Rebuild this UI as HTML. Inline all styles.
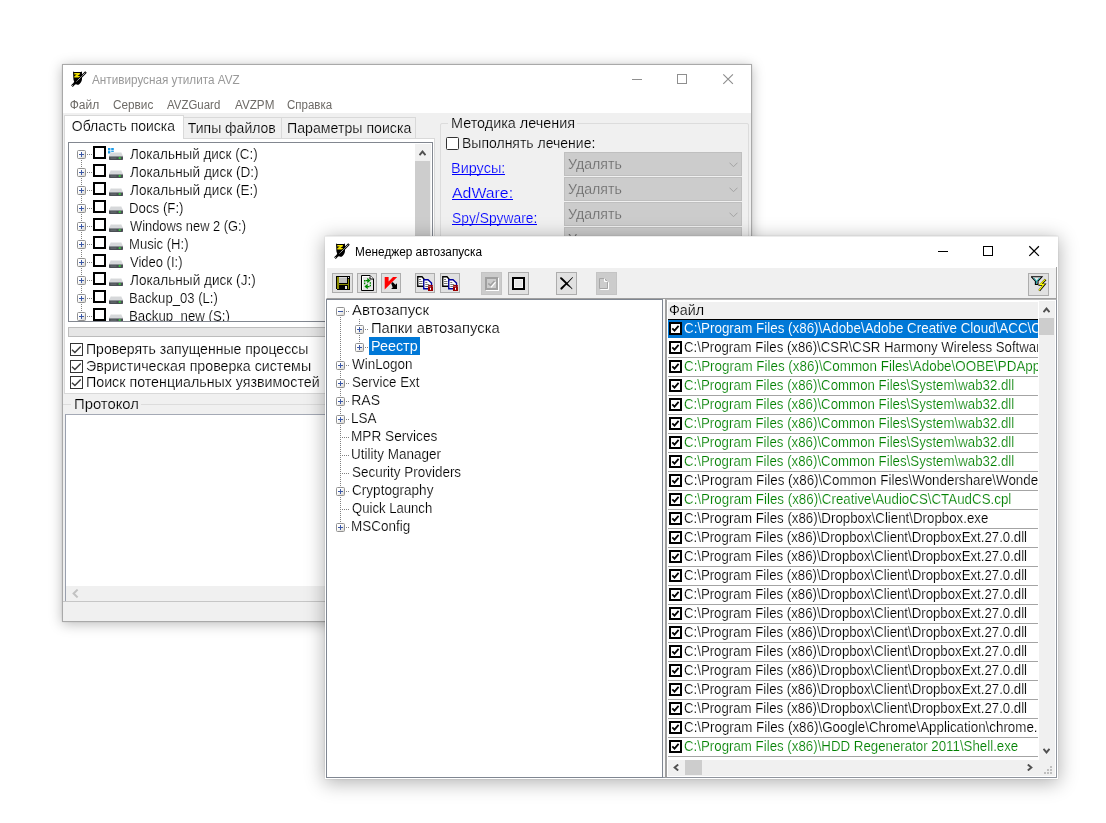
<!DOCTYPE html>
<html><head><meta charset="utf-8"><title>AVZ</title><style>
*{box-sizing:border-box;margin:0;padding:0}
html,body{width:1106px;height:823px;overflow:hidden;background:#fff}
body{position:relative;font-family:"Liberation Sans", sans-serif;font-size:14px;color:#000}
div,svg{position:absolute}
#r{left:0;top:0;width:1106px;height:823px;overflow:hidden;will-change:transform}
.t{white-space:pre;line-height:16px;height:16px;transform-origin:0 0}
.e{width:9px;height:9px;border:1px solid #919191;border-radius:1.5px;background:linear-gradient(135deg,#fff 35%,#d8d6d0)}
.e:before{content:"";position:absolute;left:1px;top:3px;width:5px;height:1px;background:#3a57a6}
.e.p:after{content:"";position:absolute;left:3px;top:1px;width:1px;height:5px;background:#3a57a6}
.hd{height:1px;background:repeating-linear-gradient(90deg,#808080 0 1px,transparent 1px 2px)}
.vd{width:1px;background:repeating-linear-gradient(180deg,#808080 0 1px,transparent 1px 2px)}
.cb{border:2px solid #000;background:#fff}
.b{border:1px solid #adadad;background:#e1e1e1}
.b.d{background:#ccc;border-color:#c4c4c4}
.r{left:0;width:370px;height:19px;border-bottom:1px solid #a4a4a4;overflow:hidden}
.r .t{left:16px;top:0}
.r svg{left:1px;top:2px}
.g{color:#008000}
</style></head><body><div id="r">
<div style="left:62px;top:64px;width:690px;height:558px;background:#f0f0f0;border:1px solid #a9a9a9;box-shadow:0 2px 12px rgba(0,0,0,.27),0 0 2px rgba(0,0,0,.1)"></div>
<div style="left:63px;top:65px;width:688px;height:48px;background:#fff"></div>
<svg style="left:71px;top:71px" width="16" height="16" viewBox="0 0 16 16" ><path d="M2 .2Q2.6 1.1 4 1.1H9Q10.4 1.1 11 .2V8.2Q10.6 12 7 14Q3.2 12.4 2.4 8.2Z" fill="#000"/><path d="M3.3 1.9h5.6v1.3L6.4 5h2.5v1.6H3.3V5.2L5.8 3.4H3.3z" fill="#f2e100"/><path d="M.9 15.1L15 1" stroke="#000" stroke-width="2.2"/><path d="M3.2 10.8l2.4 2.4" stroke="#000" stroke-width="1.6"/><path d="M5.6 10.4L14.6 1.4" stroke="#fff" stroke-width=".8" stroke-dasharray="1.3 .5"/><path d="M1.2 14.8l.9-.9" stroke="#fff" stroke-width=".8"/></svg>
<div class="t" style="left:92.1px;top:72px;font-size:12px;color:#999;transform:scaleX(0.9770);">Антивирусная утилита AVZ</div>
<svg style="left:628px;top:70px" width="110" height="20" viewBox="0 0 110 20" ><g stroke="#8f8f8f" fill="none"><path d="M4 9.5h10"/><rect x="49.5" y="4.5" width="9" height="9"/><path d="M95.3 4.3l9.6 9.6M104.9 4.3l-9.6 9.6" stroke-width="1.15"/></g></svg>
<div class="t" style="left:69.7px;top:97px;font-size:12px;color:#6d6a66;">Файл</div>
<div class="t" style="left:112.6px;top:97px;font-size:12px;color:#6d6a66;transform:scaleX(0.9809);">Сервис</div>
<div class="t" style="left:167.1px;top:97px;font-size:12px;color:#6d6a66;transform:scaleX(0.9543);">AVZGuard</div>
<div class="t" style="left:234.5px;top:97px;font-size:12px;color:#6d6a66;transform:scaleX(0.9735);">AVZPM</div>
<div class="t" style="left:287.3px;top:97px;font-size:12px;color:#6d6a66;transform:scaleX(0.9598);">Справка</div>
<div style="left:184px;top:117px;width:98px;height:22px;background:#f0f0f0;border:1px solid #d9d9d9;border-bottom:0;border-left:0"></div>
<div style="left:281px;top:117px;width:135px;height:22px;background:#f0f0f0;border:1px solid #d9d9d9;border-bottom:0"></div>
<div style="left:64px;top:138px;width:371px;height:256px;background:#fff;border:1px solid #d9d9d9"></div>
<div style="left:64px;top:115px;width:120px;height:24px;background:#fff;border:1px solid #d9d9d9;border-bottom:0"></div>
<div class="t" style="left:71.8px;top:118px;-webkit-text-stroke:0.18px #fff;">Область поиска</div>
<div class="t" style="left:187.8px;top:120px;-webkit-text-stroke:0.18px #f0f0f0;">Типы файлов</div>
<div class="t" style="left:287.1px;top:120px;transform:scaleX(1.0115);-webkit-text-stroke:0.18px #f0f0f0;">Параметры поиска</div>
<div style="left:68px;top:142px;width:365px;height:180px;background:#fff;border:1px solid #828790;overflow:hidden">
<div class="vd" style="left:12px;top:17px;width:1px;height:170px;"></div>
<div class="hd" style="left:18px;top:11px;width:6px;height:1px;"></div>
<div class="e p" style="left:8px;top:7px;width:9px;height:9px;"></div>
<div class="cb" style="left:24px;top:3px;width:13px;height:13px;"></div>
<svg style="left:39px;top:5px" width="6" height="6" viewBox="0 0 6 6" ><rect x="0" y="0" width="2.4" height="2.4" fill="#1b9cea"/><rect x="3.2" y="0" width="2.6" height="2.4" fill="#1b9cea"/><rect x="0" y="3.1" width="2.4" height="2.4" fill="#1b9cea"/><rect x="3.2" y="3.1" width="2.6" height="2.4" fill="#1b9cea"/></svg>
<svg style="left:40px;top:9px" width="14" height="8" viewBox="0 0 14 8" ><path d="M2 0h10l2 4H0z" fill="#d6d8da"/><path d="M2.3 0h9.4l.4 1H1.9z" fill="#eceded"/><rect x="0" y="4" width="14" height="4" rx=".7" fill="#4a4f54"/><rect x="0" y="4" width="14" height="1" fill="#8b9094"/><rect x="1.5" y="5.6" width="6" height="1" fill="#6c7176"/><rect x="9.6" y="5.2" width="2.2" height="1.6" rx=".5" fill="#38e038"/></svg>
<div class="t" style="left:60.6px;top:3px;transform:scaleX(0.9642);-webkit-text-stroke:0.18px #fff;">Локальный диск (C:)</div>
<div class="hd" style="left:18px;top:29px;width:6px;height:1px;"></div>
<div class="e p" style="left:8px;top:25px;width:9px;height:9px;"></div>
<div class="cb" style="left:24px;top:21px;width:13px;height:13px;"></div>
<svg style="left:40px;top:27px" width="14" height="8" viewBox="0 0 14 8" ><path d="M2 0h10l2 4H0z" fill="#d6d8da"/><path d="M2.3 0h9.4l.4 1H1.9z" fill="#eceded"/><rect x="0" y="4" width="14" height="4" rx=".7" fill="#4a4f54"/><rect x="0" y="4" width="14" height="1" fill="#8b9094"/><rect x="1.5" y="5.6" width="6" height="1" fill="#6c7176"/><rect x="9.6" y="5.2" width="2.2" height="1.6" rx=".5" fill="#38e038"/></svg>
<div class="t" style="left:60.6px;top:21px;transform:scaleX(0.9703);-webkit-text-stroke:0.18px #fff;">Локальный диск (D:)</div>
<div class="hd" style="left:18px;top:47px;width:6px;height:1px;"></div>
<div class="e p" style="left:8px;top:43px;width:9px;height:9px;"></div>
<div class="cb" style="left:24px;top:39px;width:13px;height:13px;"></div>
<svg style="left:40px;top:45px" width="14" height="8" viewBox="0 0 14 8" ><path d="M2 0h10l2 4H0z" fill="#d6d8da"/><path d="M2.3 0h9.4l.4 1H1.9z" fill="#eceded"/><rect x="0" y="4" width="14" height="4" rx=".7" fill="#4a4f54"/><rect x="0" y="4" width="14" height="1" fill="#8b9094"/><rect x="1.5" y="5.6" width="6" height="1" fill="#6c7176"/><rect x="9.6" y="5.2" width="2.2" height="1.6" rx=".5" fill="#38e038"/></svg>
<div class="t" style="left:60.6px;top:39px;transform:scaleX(0.9700);-webkit-text-stroke:0.18px #fff;">Локальный диск (E:)</div>
<div class="hd" style="left:18px;top:65px;width:6px;height:1px;"></div>
<div class="e p" style="left:8px;top:61px;width:9px;height:9px;"></div>
<div class="cb" style="left:24px;top:57px;width:13px;height:13px;"></div>
<svg style="left:40px;top:63px" width="14" height="8" viewBox="0 0 14 8" ><path d="M2 0h10l2 4H0z" fill="#d6d8da"/><path d="M2.3 0h9.4l.4 1H1.9z" fill="#eceded"/><rect x="0" y="4" width="14" height="4" rx=".7" fill="#4a4f54"/><rect x="0" y="4" width="14" height="1" fill="#8b9094"/><rect x="1.5" y="5.6" width="6" height="1" fill="#6c7176"/><rect x="9.6" y="5.2" width="2.2" height="1.6" rx=".5" fill="#38e038"/></svg>
<div class="t" style="left:59.6px;top:57px;transform:scaleX(0.9470);-webkit-text-stroke:0.18px #fff;">Docs (F:)</div>
<div class="hd" style="left:18px;top:83px;width:6px;height:1px;"></div>
<div class="e p" style="left:8px;top:79px;width:9px;height:9px;"></div>
<div class="cb" style="left:24px;top:75px;width:13px;height:13px;"></div>
<svg style="left:40px;top:81px" width="14" height="8" viewBox="0 0 14 8" ><path d="M2 0h10l2 4H0z" fill="#d6d8da"/><path d="M2.3 0h9.4l.4 1H1.9z" fill="#eceded"/><rect x="0" y="4" width="14" height="4" rx=".7" fill="#4a4f54"/><rect x="0" y="4" width="14" height="1" fill="#8b9094"/><rect x="1.5" y="5.6" width="6" height="1" fill="#6c7176"/><rect x="9.6" y="5.2" width="2.2" height="1.6" rx=".5" fill="#38e038"/></svg>
<div class="t" style="left:60.6px;top:75px;transform:scaleX(0.9199);-webkit-text-stroke:0.18px #fff;">Windows new 2 (G:)</div>
<div class="hd" style="left:18px;top:101px;width:6px;height:1px;"></div>
<div class="e p" style="left:8px;top:97px;width:9px;height:9px;"></div>
<div class="cb" style="left:24px;top:93px;width:13px;height:13px;"></div>
<svg style="left:40px;top:99px" width="14" height="8" viewBox="0 0 14 8" ><path d="M2 0h10l2 4H0z" fill="#d6d8da"/><path d="M2.3 0h9.4l.4 1H1.9z" fill="#eceded"/><rect x="0" y="4" width="14" height="4" rx=".7" fill="#4a4f54"/><rect x="0" y="4" width="14" height="1" fill="#8b9094"/><rect x="1.5" y="5.6" width="6" height="1" fill="#6c7176"/><rect x="9.6" y="5.2" width="2.2" height="1.6" rx=".5" fill="#38e038"/></svg>
<div class="t" style="left:59.6px;top:93px;transform:scaleX(0.9326);-webkit-text-stroke:0.18px #fff;">Music (H:)</div>
<div class="hd" style="left:18px;top:119px;width:6px;height:1px;"></div>
<div class="e p" style="left:8px;top:115px;width:9px;height:9px;"></div>
<div class="cb" style="left:24px;top:111px;width:13px;height:13px;"></div>
<svg style="left:40px;top:117px" width="14" height="8" viewBox="0 0 14 8" ><path d="M2 0h10l2 4H0z" fill="#d6d8da"/><path d="M2.3 0h9.4l.4 1H1.9z" fill="#eceded"/><rect x="0" y="4" width="14" height="4" rx=".7" fill="#4a4f54"/><rect x="0" y="4" width="14" height="1" fill="#8b9094"/><rect x="1.5" y="5.6" width="6" height="1" fill="#6c7176"/><rect x="9.6" y="5.2" width="2.2" height="1.6" rx=".5" fill="#38e038"/></svg>
<div class="t" style="left:60.6px;top:111px;transform:scaleX(0.9278);-webkit-text-stroke:0.18px #fff;">Video (I:)</div>
<div class="hd" style="left:18px;top:137px;width:6px;height:1px;"></div>
<div class="e p" style="left:8px;top:133px;width:9px;height:9px;"></div>
<div class="cb" style="left:24px;top:129px;width:13px;height:13px;"></div>
<svg style="left:40px;top:135px" width="14" height="8" viewBox="0 0 14 8" ><path d="M2 0h10l2 4H0z" fill="#d6d8da"/><path d="M2.3 0h9.4l.4 1H1.9z" fill="#eceded"/><rect x="0" y="4" width="14" height="4" rx=".7" fill="#4a4f54"/><rect x="0" y="4" width="14" height="1" fill="#8b9094"/><rect x="1.5" y="5.6" width="6" height="1" fill="#6c7176"/><rect x="9.6" y="5.2" width="2.2" height="1.6" rx=".5" fill="#38e038"/></svg>
<div class="t" style="left:60.6px;top:129px;transform:scaleX(0.9720);-webkit-text-stroke:0.18px #fff;">Локальный диск (J:)</div>
<div class="hd" style="left:18px;top:155px;width:6px;height:1px;"></div>
<div class="e p" style="left:8px;top:151px;width:9px;height:9px;"></div>
<div class="cb" style="left:24px;top:147px;width:13px;height:13px;"></div>
<svg style="left:40px;top:153px" width="14" height="8" viewBox="0 0 14 8" ><path d="M2 0h10l2 4H0z" fill="#d6d8da"/><path d="M2.3 0h9.4l.4 1H1.9z" fill="#eceded"/><rect x="0" y="4" width="14" height="4" rx=".7" fill="#4a4f54"/><rect x="0" y="4" width="14" height="1" fill="#8b9094"/><rect x="1.5" y="5.6" width="6" height="1" fill="#6c7176"/><rect x="9.6" y="5.2" width="2.2" height="1.6" rx=".5" fill="#38e038"/></svg>
<div class="t" style="left:59.6px;top:147px;transform:scaleX(0.9350);-webkit-text-stroke:0.18px #fff;">Backup_03 (L:)</div>
<div class="hd" style="left:18px;top:173px;width:6px;height:1px;"></div>
<div class="e p" style="left:8px;top:169px;width:9px;height:9px;"></div>
<div class="cb" style="left:24px;top:165px;width:13px;height:13px;"></div>
<svg style="left:40px;top:171px" width="14" height="8" viewBox="0 0 14 8" ><path d="M2 0h10l2 4H0z" fill="#d6d8da"/><path d="M2.3 0h9.4l.4 1H1.9z" fill="#eceded"/><rect x="0" y="4" width="14" height="4" rx=".7" fill="#4a4f54"/><rect x="0" y="4" width="14" height="1" fill="#8b9094"/><rect x="1.5" y="5.6" width="6" height="1" fill="#6c7176"/><rect x="9.6" y="5.2" width="2.2" height="1.6" rx=".5" fill="#38e038"/></svg>
<div class="t" style="left:59.6px;top:165px;transform:scaleX(0.9465);-webkit-text-stroke:0.18px #fff;">Backup_new (S:)</div>
<div style="left:346px;top:1px;width:16px;height:177px;background:#f0f0f0"></div>
<div style="left:346px;top:18px;width:15px;height:160px;background:#cdcdcd"></div>
<svg style="left:350px;top:7px" width="7" height="6" viewBox="0 0 7 6" ><path d="M.5 5.2L3.5 1.6 6.5 5.2" stroke="#505050" stroke-width="1.9" fill="none"/></svg>
</div>
<div style="left:68px;top:327px;width:365px;height:10px;background:#e6e6e6;border:1px solid #bcbcbc"></div>
<svg style="left:70px;top:343px" width="13" height="13" viewBox="0 0 13 13" ><rect x=".5" y=".5" width="12" height="12" fill="#fff" stroke="#333"/><path d="M2 6.7L4.9 9.5 10.7 3.5" stroke="#3a3a3a" stroke-width="1.4" fill="none"/></svg>
<div class="t" style="left:85.7px;top:341px;transform:scaleX(1.0036);-webkit-text-stroke:0.18px #fff;">Проверять запущенные процессы</div>
<svg style="left:70px;top:360px" width="13" height="13" viewBox="0 0 13 13" ><rect x=".5" y=".5" width="12" height="12" fill="#fff" stroke="#333"/><path d="M2 6.7L4.9 9.5 10.7 3.5" stroke="#3a3a3a" stroke-width="1.4" fill="none"/></svg>
<div class="t" style="left:86.1px;top:358px;transform:scaleX(1.0150);-webkit-text-stroke:0.18px #fff;">Эвристическая проверка системы</div>
<svg style="left:70px;top:376px" width="13" height="13" viewBox="0 0 13 13" ><rect x=".5" y=".5" width="12" height="12" fill="#fff" stroke="#333"/><path d="M2 6.7L4.9 9.5 10.7 3.5" stroke="#3a3a3a" stroke-width="1.4" fill="none"/></svg>
<div class="t" style="left:85.6px;top:374px;transform:scaleX(1.0173);-webkit-text-stroke:0.18px #fff;">Поиск потенциальных уязвимостей</div>
<div style="left:63px;top:404px;width:372px;height:1px;background:#dcdcdc"></div>
<div style="left:71px;top:398px;width:70px;height:12px;background:#f0f0f0"></div>
<div class="t" style="left:73.5px;top:396px;transform:scaleX(1.0590);-webkit-text-stroke:0.18px #f0f0f0;">Протокол</div>
<div style="left:65px;top:414px;width:420px;height:188px;background:#fff;border:1px solid #9aa0ae;border-top-color:#a4a9b5"></div>
<div style="left:66px;top:586px;width:420px;height:15px;background:#f0f0f0"></div>
<svg style="left:72px;top:589px" width="7" height="9" viewBox="0 0 7 9" ><path d="M5.6 .6L1.6 4.5 5.6 8.4" stroke="#c2c2c2" stroke-width="2" fill="none"/></svg>
<div style="left:63px;top:601px;width:688px;height:1px;background:#c6c6c6"></div>
<div style="left:440px;top:123px;width:309px;height:320px;border:1px solid #dcdcdc;border-radius:2px"></div>
<div style="left:448px;top:117px;width:129px;height:12px;background:#f0f0f0"></div>
<div class="t" style="left:450.6px;top:115px;transform:scaleX(1.0281);-webkit-text-stroke:0.18px #f0f0f0;">Методика лечения</div>
<div style="left:446px;top:137px;width:13px;height:13px;background:#fff;border:1px solid #333;border-radius:1.5px"></div>
<div class="t" style="left:462.0px;top:135px;-webkit-text-stroke:0.18px #f0f0f0;">Выполнять лечение:</div>
<div class="t" style="left:451.0px;top:160px;color:#00f;transform:scaleX(1.0326);-webkit-text-stroke:0.18px #f0f0f0;">Вирусы:</div>
<div style="left:452px;top:174px;width:53px;height:1px;background:#00f"></div>
<div class="t" style="left:452.2px;top:185px;color:#00f;transform:scaleX(1.1321);-webkit-text-stroke:0.18px #f0f0f0;">AdWare:</div>
<div style="left:452px;top:199px;width:61px;height:1px;background:#00f"></div>
<div class="t" style="left:451.6px;top:210px;color:#00f;transform:scaleX(0.9886);-webkit-text-stroke:0.18px #f0f0f0;">Spy/Spyware:</div>
<div style="left:452px;top:224px;width:85px;height:1px;background:#00f"></div>
<div style="left:564px;top:152px;width:178px;height:24px;background:#ccc;border:1px solid #bfbfbf"></div>
<div class="t" style="left:567.9px;top:156px;color:#6d6d6d;transform:scaleX(1.0102);-webkit-text-stroke:0.18px #ccc;">Удалять</div>
<svg style="left:729px;top:162px" width="9" height="6" viewBox="0 0 9 6" ><path d="M.5 .7L4.5 4.7 8.5 .7" stroke="#a2a2a2" fill="none"/></svg>
<div style="left:564px;top:177px;width:178px;height:24px;background:#ccc;border:1px solid #bfbfbf"></div>
<div class="t" style="left:567.9px;top:181px;color:#6d6d6d;transform:scaleX(1.0102);-webkit-text-stroke:0.18px #ccc;">Удалять</div>
<svg style="left:729px;top:187px" width="9" height="6" viewBox="0 0 9 6" ><path d="M.5 .7L4.5 4.7 8.5 .7" stroke="#a2a2a2" fill="none"/></svg>
<div style="left:564px;top:202px;width:178px;height:24px;background:#ccc;border:1px solid #bfbfbf"></div>
<div class="t" style="left:567.9px;top:206px;color:#6d6d6d;transform:scaleX(1.0102);-webkit-text-stroke:0.18px #ccc;">Удалять</div>
<svg style="left:729px;top:212px" width="9" height="6" viewBox="0 0 9 6" ><path d="M.5 .7L4.5 4.7 8.5 .7" stroke="#a2a2a2" fill="none"/></svg>
<div style="left:564px;top:227px;width:178px;height:24px;background:#ccc;border:1px solid #bfbfbf"></div>
<div class="t" style="left:567.9px;top:231px;color:#6d6d6d;transform:scaleX(1.0102);-webkit-text-stroke:0.18px #ccc;">Удалять</div>
<svg style="left:729px;top:237px" width="9" height="6" viewBox="0 0 9 6" ><path d="M.5 .7L4.5 4.7 8.5 .7" stroke="#a2a2a2" fill="none"/></svg>
<div style="left:325px;top:236px;width:733px;height:543px;background:#fff;border-top:1px solid #ececec;box-shadow:0 3px 18px 1px rgba(0,0,0,.30),0 0 2px rgba(0,0,0,.14)"></div>
<div style="left:326px;top:268px;width:731px;height:31px;background:#f0f0f0;border-left:1px solid #fff;border-right:1px solid #a0a0a0;border-bottom:1px solid #a0a0a0"></div>
<div style="left:1056px;top:267px;width:1px;height:1px;background:#a0a0a0"></div>
<svg style="left:334px;top:243px" width="16" height="16" viewBox="0 0 16 16" ><path d="M2 .2Q2.6 1.1 4 1.1H9Q10.4 1.1 11 .2V8.2Q10.6 12 7 14Q3.2 12.4 2.4 8.2Z" fill="#000"/><path d="M3.3 1.9h5.6v1.3L6.4 5h2.5v1.6H3.3V5.2L5.8 3.4H3.3z" fill="#f2e100"/><path d="M.9 15.1L15 1" stroke="#000" stroke-width="2.2"/><path d="M3.2 10.8l2.4 2.4" stroke="#000" stroke-width="1.6"/><path d="M5.6 10.4L14.6 1.4" stroke="#fff" stroke-width=".8" stroke-dasharray="1.3 .5"/><path d="M1.2 14.8l.9-.9" stroke="#fff" stroke-width=".8"/></svg>
<div class="t" style="left:354.5px;top:244px;font-size:12px;transform:scaleX(0.9845);">Менеджер автозапуска</div>
<svg style="left:930px;top:242px" width="120" height="20" viewBox="0 0 120 20" ><g stroke="#000" fill="none"><path d="M8 9.5h10"/><rect x="53.5" y="4.5" width="9" height="9"/><path d="M99.3 4.3l9.6 9.6M108.9 4.3l-9.6 9.6" stroke-width="1.25"/></g></svg>
<div class="b" style="left:332px;top:273px;width:21px;height:20px;"></div>
<div class="b" style="left:357px;top:273px;width:20px;height:20px;"></div>
<div class="b" style="left:381px;top:273px;width:20px;height:20px;"></div>
<div class="b" style="left:415px;top:273px;width:20px;height:20px;"></div>
<div class="b" style="left:440px;top:273px;width:20px;height:20px;"></div>
<div class="b d" style="left:481px;top:272px;width:21px;height:23px;"></div>
<div class="b" style="left:508px;top:272px;width:21px;height:23px;"></div>
<div class="b" style="left:556px;top:272px;width:21px;height:23px;"></div>
<div class="b d" style="left:596px;top:272px;width:21px;height:23px;"></div>
<div class="b" style="left:1028px;top:273px;width:21px;height:23px;"></div>
<svg style="left:336px;top:276px" width="14" height="14" viewBox="0 0 14 14" shape-rendering="crispEdges"><rect x="0" y="0" width="14" height="14" fill="#000"/><rect x="1" y="1" width="2" height="12" fill="#8c8c00"/><rect x="12" y="3" width="1" height="10" fill="#8c8c00"/><rect x="3" y="8" width="9" height="1" fill="#8c8c00"/><rect x="3" y="1" width="8" height="6" fill="#c0c0c0"/><rect x="3" y="1" width="8" height="1" fill="#d8d8d8"/><rect x="12" y="1" width="1" height="1" fill="#e8e8e8"/><rect x="3" y="9" width="9" height="4" fill="#000"/><rect x="9" y="10" width="2" height="3" fill="#e0e0e0"/><rect x="0" y="13" width="1" height="1" fill="#e1e1e1"/></svg>
<svg style="left:361px;top:275px" width="13" height="16" viewBox="0 0 13 16" ><path d="M.5 .5H9L12.5 4V15.5H.5z" fill="#e6e6e6" stroke="#000" stroke-width="1"/><path d="M9 .5V4h3.5" fill="#fff" stroke="#000" stroke-width="1"/><path d="M1.5 1.5h7M1.5 1.5v13" stroke="#fff" stroke-width="1" fill="none"/><g fill="#008a00" stroke="none"><path d="M6.3 2.8L9.6 5.5 6.3 8.2V6.3H4.5V5H6.3z"/><path d="M6.700000000000001 8.8L3.4 11.5 6.7 14.2V12.3H8.5V11H6.7z"/><rect x="3" y="5" width="1.3" height="1.6"/><rect x="3" y="7.6" width="1.3" height="1.6"/><rect x="8.700000000000001" y="7.2" width="1.3" height="1.6"/><rect x="8.700000000000001" y="9.8" width="1.3" height="1.5"/></g></svg>
<svg style="left:384px;top:277px" width="14" height="13" viewBox="0 0 14 13" ><path d="M.7 0H4.6V4.6L9 0h4.2L.7 12.6z" fill="#f00"/><path d="M7.2 6.6l1.5-1.5 2.7 2.7 1.6-1.6v5.9H7.1l1.6-1.6z" fill="#000"/></svg>
<svg style="left:417px;top:276px" width="17" height="16" viewBox="0 0 17 16" ><path d="M.75 .75H5L7 3v7.25H.75z" fill="#fff" stroke="#000" stroke-width="1.3"/><path d="M2 3.5h2M2 5.5h3.5M2 7.5h3.5" stroke="#777" stroke-width="1"/><path d="M6.75 3.75H11L14.5 7v5.75H6.75z" fill="#fff" stroke="#00009c" stroke-width="1.4"/><path d="M8.3 6.5h2M8.3 8.5h4M8.3 10.5h3" stroke="#777" stroke-width="1"/><path d="M11.8 10.6V9.6h3.4v1" stroke="#9c0000" stroke-width="1.2" fill="none"/><rect x="11" y="10.5" width="5" height="4.5" fill="#9c0000"/><rect x="13" y="11.8" width="1" height="2" fill="#fff"/></svg>
<svg style="left:442px;top:276px" width="17" height="16" viewBox="0 0 17 16" ><path d="M.75 .75H5L7 3v7.25H.75z" fill="#fff" stroke="#000" stroke-width="1.3"/><path d="M2 3.5h2M2 5.5h3.5M2 7.5h3.5" stroke="#777" stroke-width="1"/><path d="M6.75 3.75H11L14.5 7v5.75H6.75z" fill="#fff" stroke="#00009c" stroke-width="1.4"/><path d="M8.3 6.5h2M8.3 8.5h4M8.3 10.5h3" stroke="#777" stroke-width="1"/><path d="M11.8 10.6V9.6h3.4v1" stroke="#9c0000" stroke-width="1.2" fill="none"/><rect x="11" y="10.5" width="5" height="4.5" fill="#9c0000"/><rect x="13" y="11.8" width="1" height="2" fill="#fff"/></svg>
<svg style="left:485px;top:277px" width="14" height="14" viewBox="0 0 14 14" ><rect x="2" y="2" width="11" height="11" fill="none" stroke="#fff" stroke-width="2"/><rect x="1" y="1" width="11" height="11" fill="#ccc" stroke="#a0a0a0" stroke-width="2"/><path d="M4.2 7.4l2.2 2.2 4-4.6" stroke="#fff" stroke-width="1.6" fill="none"/><path d="M3.3 6.4l2.2 2.2 4-4.6" stroke="#a0a0a0" stroke-width="1.7" fill="none"/></svg>
<svg style="left:512px;top:277px" width="13" height="13" viewBox="0 0 13 13" ><rect x="1" y="1" width="11" height="11" fill="#e4e4e4" stroke="#000" stroke-width="2"/><rect x="2.5" y="2.5" width="8" height="8" fill="none" stroke="#f4f4f4" stroke-width="1"/></svg>
<svg style="left:559px;top:276px" width="15" height="15" viewBox="0 0 15 15" ><path d="M1.2 1.6Q2.3 .8 3.4 1.9L8 6.6 13.6 1l.4.4L8.7 7.4l4.2 4.5.6 1.2-.7.2-.6-1L7.4 8.8 3.2 13.3Q2.3 14 1.6 13.2T1.9 11.600000000000001L6.300000000000001 7.6 1.3 2.8Q.7 2.1 1.2 1.6z" fill="#000"/></svg>
<svg style="left:599px;top:278px" width="11" height="12" viewBox="0 0 11 12" ><path d="M1.5 1.5H6.5L9.5 4.5V11.5H1.5z" fill="none" stroke="#fff" stroke-width="1"/><path d="M.5 .5H5.5L8.5 3.5V10.5H.5z" fill="#ccc" stroke="#a6a6a6" stroke-width="1"/><path d="M5.5 .5V3.5H8.5" fill="none" stroke="#fff" stroke-width="1"/></svg>
<svg style="left:1031px;top:276px" width="18" height="16" viewBox="0 0 18 16" ><path d="M.3 .8H11L7 5.2V8.4H4.4V5.2z" fill="#e8e8e8" stroke="#000" stroke-width="1.1"/><path d="M2.6 1.8L5.4 5V7.6M8.6 1.8L6 5" stroke="#00a0a0" stroke-width="1" fill="none"/><path d="M14.600000000000001 3.4L9.6 8.6H13.2L8.2 14.6" stroke="#000" stroke-width="2.2" fill="none"/><path d="M14.4 3.4L9.2 8.3H12.8L8 14.4" stroke="#ff0" stroke-width="1.2" fill="none"/></svg>
<div style="left:326px;top:299px;width:337px;height:479px;background:#fff;border:1px solid #7f8691;overflow:hidden">
<div class="vd" style="left:13px;top:17px;width:1px;height:210px;"></div>
<div class="vd" style="left:32px;top:19px;width:1px;height:28px;"></div>
<div class="hd" style="left:19px;top:11px;width:3px;height:1px;"></div>
<div class="e" style="left:9px;top:7px;width:9px;height:9px;"></div>
<div class="t" style="left:25.3px;top:2px;transform:scaleX(1.0686);-webkit-text-stroke:0.18px #fff;">Автозапуск</div>
<div class="hd" style="left:38px;top:29px;width:3px;height:1px;"></div>
<div class="e p" style="left:28px;top:25px;width:9px;height:9px;"></div>
<div class="t" style="left:44.0px;top:20px;transform:scaleX(1.0556);-webkit-text-stroke:0.18px #fff;">Папки автозапуска</div>
<div class="hd" style="left:38px;top:47px;width:3px;height:1px;"></div>
<div class="e p" style="left:28px;top:43px;width:9px;height:9px;"></div>
<div style="left:42px;top:37px;width:51px;height:18px;background:#0078d7"></div>
<div class="t" style="left:44.0px;top:38px;color:#fff;transform:scaleX(1.0260);-webkit-text-stroke:0.06px #0078d7;">Реестр</div>
<div class="hd" style="left:19px;top:65px;width:3px;height:1px;"></div>
<div class="e p" style="left:9px;top:61px;width:9px;height:9px;"></div>
<div class="t" style="left:25.2px;top:56px;transform:scaleX(0.9601);-webkit-text-stroke:0.18px #fff;">WinLogon</div>
<div class="hd" style="left:19px;top:83px;width:3px;height:1px;"></div>
<div class="e p" style="left:9px;top:79px;width:9px;height:9px;"></div>
<div class="t" style="left:24.7px;top:74px;transform:scaleX(0.9533);-webkit-text-stroke:0.18px #fff;">Service Ext</div>
<div class="hd" style="left:19px;top:101px;width:3px;height:1px;"></div>
<div class="e p" style="left:9px;top:97px;width:9px;height:9px;"></div>
<div class="t" style="left:24.2px;top:92px;-webkit-text-stroke:0.18px #fff;">RAS</div>
<div class="hd" style="left:19px;top:119px;width:3px;height:1px;"></div>
<div class="e p" style="left:9px;top:115px;width:9px;height:9px;"></div>
<div class="t" style="left:24.2px;top:110px;transform:scaleX(0.9647);-webkit-text-stroke:0.18px #fff;">LSA</div>
<div class="hd" style="left:15px;top:137px;width:7px;height:1px;"></div>
<div class="t" style="left:24.2px;top:128px;transform:scaleX(0.9732);-webkit-text-stroke:0.18px #fff;">MPR Services</div>
<div class="hd" style="left:15px;top:155px;width:7px;height:1px;"></div>
<div class="t" style="left:24.3px;top:146px;transform:scaleX(0.9635);-webkit-text-stroke:0.18px #fff;">Utility Manager</div>
<div class="hd" style="left:15px;top:173px;width:7px;height:1px;"></div>
<div class="t" style="left:24.7px;top:164px;transform:scaleX(0.9604);-webkit-text-stroke:0.18px #fff;">Security Providers</div>
<div class="hd" style="left:19px;top:191px;width:3px;height:1px;"></div>
<div class="e p" style="left:9px;top:187px;width:9px;height:9px;"></div>
<div class="t" style="left:24.6px;top:182px;transform:scaleX(0.9687);-webkit-text-stroke:0.18px #fff;">Cryptography</div>
<div class="hd" style="left:15px;top:209px;width:7px;height:1px;"></div>
<div class="t" style="left:24.7px;top:200px;transform:scaleX(0.9365);-webkit-text-stroke:0.18px #fff;">Quick Launch</div>
<div class="hd" style="left:19px;top:227px;width:3px;height:1px;"></div>
<div class="e p" style="left:9px;top:223px;width:9px;height:9px;"></div>
<div class="t" style="left:24.2px;top:218px;transform:scaleX(0.9627);-webkit-text-stroke:0.18px #fff;">MSConfig</div>
</div>
<div style="left:663px;top:299px;width:2px;height:479px;background:#f8f8f8"></div>
<div style="left:663px;top:777px;width:2px;height:1px;background:#8f949d"></div>
<div style="left:665px;top:299px;width:392px;height:479px;background:#fff;border:1px solid #8f949d;border-left:2px solid #a0a0a0;border-top-color:#b8b8b8;overflow:hidden">
<div style="left:1px;top:2px;width:370px;height:17px;background:#f0f0f0"></div>
<div class="t" style="left:2.2px;top:2px;transform:scaleX(1.0201);-webkit-text-stroke:0.18px #f0f0f0;">Файл</div>
<div class="r" style="top:20px;left:1px;background:#0078d7;height:18px;border-bottom:0;"><svg width="13" height="13" viewBox="0 0 13 13"><rect x="1" y="1" width="11" height="11" fill="#fff" stroke="#000" stroke-width="2"/><path d="M3.3 6.3l2.2 2.3 4.1-4.7" stroke="#000" stroke-width="1.8" fill="none"/></svg><div class="t" style="left:16.0px;color:#fff;transform:scaleX(0.9557);-webkit-text-stroke:0.08px #0078d7">C:\Program Files (x86)\Adobe\Adobe Creative Cloud\ACC\Creative Cloud.exe</div></div>
<div class="r" style="top:39px;left:1px;"><svg width="13" height="13" viewBox="0 0 13 13"><rect x="1" y="1" width="11" height="11" fill="#fff" stroke="#000" stroke-width="2"/><path d="M3.3 6.3l2.2 2.3 4.1-4.7" stroke="#000" stroke-width="1.8" fill="none"/></svg><div class="t" style="left:16.0px;transform:scaleX(0.9451);-webkit-text-stroke:0.18px #fff">C:\Program Files (x86)\CSR\CSR Harmony Wireless Software Stack\CSR</div></div>
<div class="r" style="top:58px;left:1px;"><svg width="13" height="13" viewBox="0 0 13 13"><rect x="1" y="1" width="11" height="11" fill="#fff" stroke="#000" stroke-width="2"/><path d="M3.3 6.3l2.2 2.3 4.1-4.7" stroke="#000" stroke-width="1.8" fill="none"/></svg><div class="t" style="left:16.0px;color:#008000;transform:scaleX(0.9579);-webkit-text-stroke:0.18px #fff">C:\Program Files (x86)\Common Files\Adobe\OOBE\PDApp\UWA\Updater</div></div>
<div class="r" style="top:77px;left:1px;"><svg width="13" height="13" viewBox="0 0 13 13"><rect x="1" y="1" width="11" height="11" fill="#fff" stroke="#000" stroke-width="2"/><path d="M3.3 6.3l2.2 2.3 4.1-4.7" stroke="#000" stroke-width="1.8" fill="none"/></svg><div class="t" style="left:16.0px;color:#008000;transform:scaleX(0.9475);-webkit-text-stroke:0.18px #fff">C:\Program Files (x86)\Common Files\System\wab32.dll</div></div>
<div class="r" style="top:96px;left:1px;"><svg width="13" height="13" viewBox="0 0 13 13"><rect x="1" y="1" width="11" height="11" fill="#fff" stroke="#000" stroke-width="2"/><path d="M3.3 6.3l2.2 2.3 4.1-4.7" stroke="#000" stroke-width="1.8" fill="none"/></svg><div class="t" style="left:16.0px;color:#008000;transform:scaleX(0.9475);-webkit-text-stroke:0.18px #fff">C:\Program Files (x86)\Common Files\System\wab32.dll</div></div>
<div class="r" style="top:115px;left:1px;"><svg width="13" height="13" viewBox="0 0 13 13"><rect x="1" y="1" width="11" height="11" fill="#fff" stroke="#000" stroke-width="2"/><path d="M3.3 6.3l2.2 2.3 4.1-4.7" stroke="#000" stroke-width="1.8" fill="none"/></svg><div class="t" style="left:16.0px;color:#008000;transform:scaleX(0.9475);-webkit-text-stroke:0.18px #fff">C:\Program Files (x86)\Common Files\System\wab32.dll</div></div>
<div class="r" style="top:134px;left:1px;"><svg width="13" height="13" viewBox="0 0 13 13"><rect x="1" y="1" width="11" height="11" fill="#fff" stroke="#000" stroke-width="2"/><path d="M3.3 6.3l2.2 2.3 4.1-4.7" stroke="#000" stroke-width="1.8" fill="none"/></svg><div class="t" style="left:16.0px;color:#008000;transform:scaleX(0.9475);-webkit-text-stroke:0.18px #fff">C:\Program Files (x86)\Common Files\System\wab32.dll</div></div>
<div class="r" style="top:153px;left:1px;"><svg width="13" height="13" viewBox="0 0 13 13"><rect x="1" y="1" width="11" height="11" fill="#fff" stroke="#000" stroke-width="2"/><path d="M3.3 6.3l2.2 2.3 4.1-4.7" stroke="#000" stroke-width="1.8" fill="none"/></svg><div class="t" style="left:16.0px;color:#008000;transform:scaleX(0.9475);-webkit-text-stroke:0.18px #fff">C:\Program Files (x86)\Common Files\System\wab32.dll</div></div>
<div class="r" style="top:172px;left:1px;"><svg width="13" height="13" viewBox="0 0 13 13"><rect x="1" y="1" width="11" height="11" fill="#fff" stroke="#000" stroke-width="2"/><path d="M3.3 6.3l2.2 2.3 4.1-4.7" stroke="#000" stroke-width="1.8" fill="none"/></svg><div class="t" style="left:16.0px;transform:scaleX(0.9557);-webkit-text-stroke:0.18px #fff">C:\Program Files (x86)\Common Files\Wondershare\Wondershare Helper</div></div>
<div class="r" style="top:191px;left:1px;"><svg width="13" height="13" viewBox="0 0 13 13"><rect x="1" y="1" width="11" height="11" fill="#fff" stroke="#000" stroke-width="2"/><path d="M3.3 6.3l2.2 2.3 4.1-4.7" stroke="#000" stroke-width="1.8" fill="none"/></svg><div class="t" style="left:16.0px;color:#008000;transform:scaleX(0.9524);-webkit-text-stroke:0.18px #fff">C:\Program Files (x86)\Creative\AudioCS\CTAudCS.cpl</div></div>
<div class="r" style="top:210px;left:1px;"><svg width="13" height="13" viewBox="0 0 13 13"><rect x="1" y="1" width="11" height="11" fill="#fff" stroke="#000" stroke-width="2"/><path d="M3.3 6.3l2.2 2.3 4.1-4.7" stroke="#000" stroke-width="1.8" fill="none"/></svg><div class="t" style="left:16.0px;transform:scaleX(0.9494);-webkit-text-stroke:0.18px #fff">C:\Program Files (x86)\Dropbox\Client\Dropbox.exe</div></div>
<div class="r" style="top:229px;left:1px;"><svg width="13" height="13" viewBox="0 0 13 13"><rect x="1" y="1" width="11" height="11" fill="#fff" stroke="#000" stroke-width="2"/><path d="M3.3 6.3l2.2 2.3 4.1-4.7" stroke="#000" stroke-width="1.8" fill="none"/></svg><div class="t" style="left:16.0px;transform:scaleX(0.9441);-webkit-text-stroke:0.18px #fff">C:\Program Files (x86)\Dropbox\Client\DropboxExt.27.0.dll</div></div>
<div class="r" style="top:248px;left:1px;"><svg width="13" height="13" viewBox="0 0 13 13"><rect x="1" y="1" width="11" height="11" fill="#fff" stroke="#000" stroke-width="2"/><path d="M3.3 6.3l2.2 2.3 4.1-4.7" stroke="#000" stroke-width="1.8" fill="none"/></svg><div class="t" style="left:16.0px;transform:scaleX(0.9441);-webkit-text-stroke:0.18px #fff">C:\Program Files (x86)\Dropbox\Client\DropboxExt.27.0.dll</div></div>
<div class="r" style="top:267px;left:1px;"><svg width="13" height="13" viewBox="0 0 13 13"><rect x="1" y="1" width="11" height="11" fill="#fff" stroke="#000" stroke-width="2"/><path d="M3.3 6.3l2.2 2.3 4.1-4.7" stroke="#000" stroke-width="1.8" fill="none"/></svg><div class="t" style="left:16.0px;transform:scaleX(0.9441);-webkit-text-stroke:0.18px #fff">C:\Program Files (x86)\Dropbox\Client\DropboxExt.27.0.dll</div></div>
<div class="r" style="top:286px;left:1px;"><svg width="13" height="13" viewBox="0 0 13 13"><rect x="1" y="1" width="11" height="11" fill="#fff" stroke="#000" stroke-width="2"/><path d="M3.3 6.3l2.2 2.3 4.1-4.7" stroke="#000" stroke-width="1.8" fill="none"/></svg><div class="t" style="left:16.0px;transform:scaleX(0.9441);-webkit-text-stroke:0.18px #fff">C:\Program Files (x86)\Dropbox\Client\DropboxExt.27.0.dll</div></div>
<div class="r" style="top:305px;left:1px;"><svg width="13" height="13" viewBox="0 0 13 13"><rect x="1" y="1" width="11" height="11" fill="#fff" stroke="#000" stroke-width="2"/><path d="M3.3 6.3l2.2 2.3 4.1-4.7" stroke="#000" stroke-width="1.8" fill="none"/></svg><div class="t" style="left:16.0px;transform:scaleX(0.9441);-webkit-text-stroke:0.18px #fff">C:\Program Files (x86)\Dropbox\Client\DropboxExt.27.0.dll</div></div>
<div class="r" style="top:324px;left:1px;"><svg width="13" height="13" viewBox="0 0 13 13"><rect x="1" y="1" width="11" height="11" fill="#fff" stroke="#000" stroke-width="2"/><path d="M3.3 6.3l2.2 2.3 4.1-4.7" stroke="#000" stroke-width="1.8" fill="none"/></svg><div class="t" style="left:16.0px;transform:scaleX(0.9441);-webkit-text-stroke:0.18px #fff">C:\Program Files (x86)\Dropbox\Client\DropboxExt.27.0.dll</div></div>
<div class="r" style="top:343px;left:1px;"><svg width="13" height="13" viewBox="0 0 13 13"><rect x="1" y="1" width="11" height="11" fill="#fff" stroke="#000" stroke-width="2"/><path d="M3.3 6.3l2.2 2.3 4.1-4.7" stroke="#000" stroke-width="1.8" fill="none"/></svg><div class="t" style="left:16.0px;transform:scaleX(0.9441);-webkit-text-stroke:0.18px #fff">C:\Program Files (x86)\Dropbox\Client\DropboxExt.27.0.dll</div></div>
<div class="r" style="top:362px;left:1px;"><svg width="13" height="13" viewBox="0 0 13 13"><rect x="1" y="1" width="11" height="11" fill="#fff" stroke="#000" stroke-width="2"/><path d="M3.3 6.3l2.2 2.3 4.1-4.7" stroke="#000" stroke-width="1.8" fill="none"/></svg><div class="t" style="left:16.0px;transform:scaleX(0.9441);-webkit-text-stroke:0.18px #fff">C:\Program Files (x86)\Dropbox\Client\DropboxExt.27.0.dll</div></div>
<div class="r" style="top:381px;left:1px;"><svg width="13" height="13" viewBox="0 0 13 13"><rect x="1" y="1" width="11" height="11" fill="#fff" stroke="#000" stroke-width="2"/><path d="M3.3 6.3l2.2 2.3 4.1-4.7" stroke="#000" stroke-width="1.8" fill="none"/></svg><div class="t" style="left:16.0px;transform:scaleX(0.9441);-webkit-text-stroke:0.18px #fff">C:\Program Files (x86)\Dropbox\Client\DropboxExt.27.0.dll</div></div>
<div class="r" style="top:400px;left:1px;"><svg width="13" height="13" viewBox="0 0 13 13"><rect x="1" y="1" width="11" height="11" fill="#fff" stroke="#000" stroke-width="2"/><path d="M3.3 6.3l2.2 2.3 4.1-4.7" stroke="#000" stroke-width="1.8" fill="none"/></svg><div class="t" style="left:16.0px;transform:scaleX(0.9441);-webkit-text-stroke:0.18px #fff">C:\Program Files (x86)\Dropbox\Client\DropboxExt.27.0.dll</div></div>
<div class="r" style="top:419px;left:1px;"><svg width="13" height="13" viewBox="0 0 13 13"><rect x="1" y="1" width="11" height="11" fill="#fff" stroke="#000" stroke-width="2"/><path d="M3.3 6.3l2.2 2.3 4.1-4.7" stroke="#000" stroke-width="1.8" fill="none"/></svg><div class="t" style="left:16.0px;transform:scaleX(0.9547);-webkit-text-stroke:0.18px #fff">C:\Program Files (x86)\Google\Chrome\Application\chrome.exe</div></div>
<div class="r" style="top:438px;left:1px;"><svg width="13" height="13" viewBox="0 0 13 13"><rect x="1" y="1" width="11" height="11" fill="#fff" stroke="#000" stroke-width="2"/><path d="M3.3 6.3l2.2 2.3 4.1-4.7" stroke="#000" stroke-width="1.8" fill="none"/></svg><div class="t" style="left:16.0px;color:#008000;transform:scaleX(0.9490);-webkit-text-stroke:0.18px #fff">C:\Program Files (x86)\HDD Regenerator 2011\Shell.exe</div></div>
<div style="left:1px;top:19px;width:370px;height:1px;background:#000"></div>
<div style="left:372px;top:1px;width:16px;height:459px;background:#f0f0f0"></div>
<div style="left:372px;top:18px;width:15px;height:17px;background:#cdcdcd"></div>
<svg style="left:376px;top:7px" width="7" height="6" viewBox="0 0 7 6" ><path d="M.5 5.2L3.5 1.6 6.5 5.2" stroke="#505050" stroke-width="1.9" fill="none"/></svg>
<svg style="left:376px;top:448px" width="7" height="6" viewBox="0 0 7 6" ><path d="M.5 .8L3.5 4.4 6.5 .8" stroke="#505050" stroke-width="1.9" fill="none"/></svg>
<div style="left:1px;top:460px;width:387px;height:16px;background:#f0f0f0"></div>
<div style="left:18px;top:460px;width:17px;height:15px;background:#cdcdcd"></div>
<svg style="left:6px;top:464px" width="6" height="7" viewBox="0 0 6 7" ><path d="M5.2 .5L1.6 3.5 5.2 6.5" stroke="#505050" stroke-width="1.9" fill="none"/></svg>
<svg style="left:360px;top:464px" width="6" height="7" viewBox="0 0 6 7" ><path d="M.8 .5L4.4 3.5 .8 6.5" stroke="#505050" stroke-width="1.9" fill="none"/></svg>
<svg style="left:377px;top:466px" width="9" height="9" viewBox="0 0 9 9" ><rect x="6" y="0" width="2" height="2" fill="#bfbfbf"/><rect x="3" y="3" width="2" height="2" fill="#bfbfbf"/><rect x="6" y="3" width="2" height="2" fill="#bfbfbf"/><rect x="0" y="6" width="2" height="2" fill="#bfbfbf"/><rect x="3" y="6" width="2" height="2" fill="#bfbfbf"/><rect x="6" y="6" width="2" height="2" fill="#bfbfbf"/></svg>
</div>
</div></body></html>
